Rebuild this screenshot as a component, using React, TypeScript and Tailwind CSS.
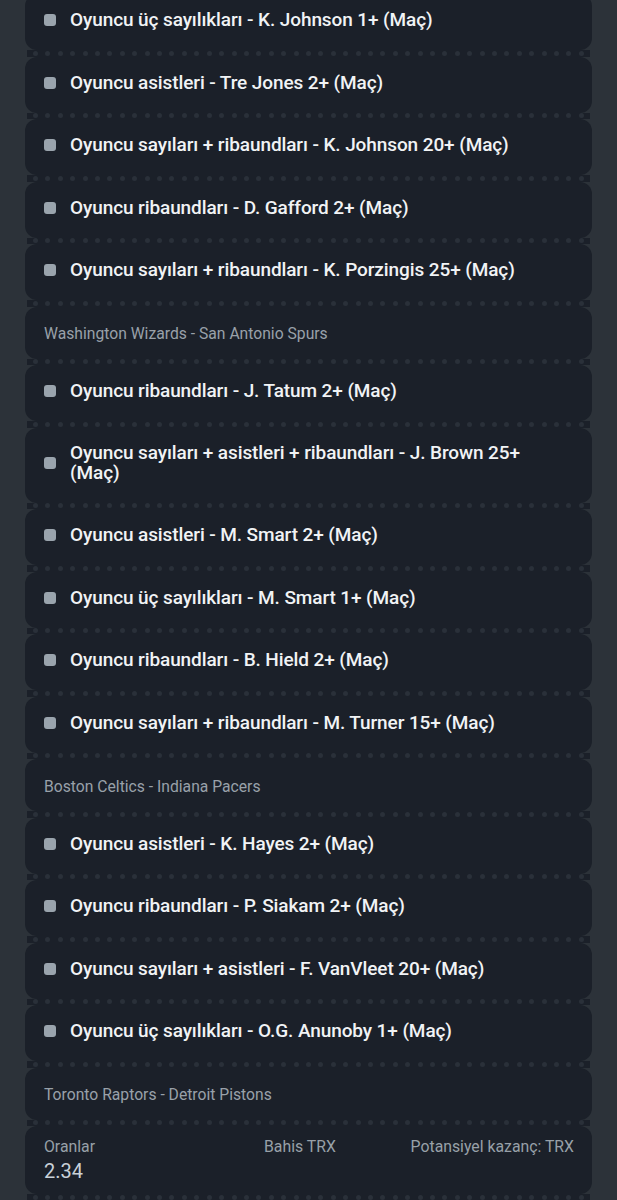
import React from "react";

type Item =
  | { kind: "bet"; text: string; tall?: boolean }
  | { kind: "match"; text: string };

const items: Item[] = [
  { kind: "bet", text: "Oyuncu üç sayılıkları - K. Johnson 1+ (Maç)" },
  { kind: "bet", text: "Oyuncu asistleri - Tre Jones 2+ (Maç)" },
  { kind: "bet", text: "Oyuncu sayıları + ribaundları - K. Johnson 20+ (Maç)" },
  { kind: "bet", text: "Oyuncu ribaundları - D. Gafford 2+ (Maç)" },
  { kind: "bet", text: "Oyuncu sayıları + ribaundları - K. Porzingis 25+ (Maç)" },
  { kind: "match", text: "Washington Wizards - San Antonio Spurs" },
  { kind: "bet", text: "Oyuncu ribaundları - J. Tatum 2+ (Maç)" },
  { kind: "bet", text: "Oyuncu sayıları + asistleri + ribaundları - J. Brown 25+ (Maç)", tall: true },
  { kind: "bet", text: "Oyuncu asistleri - M. Smart 2+ (Maç)" },
  { kind: "bet", text: "Oyuncu üç sayılıkları - M. Smart 1+ (Maç)" },
  { kind: "bet", text: "Oyuncu ribaundları - B. Hield 2+ (Maç)" },
  { kind: "bet", text: "Oyuncu sayıları + ribaundları - M. Turner 15+ (Maç)" },
  { kind: "match", text: "Boston Celtics - Indiana Pacers" },
  { kind: "bet", text: "Oyuncu asistleri - K. Hayes 2+ (Maç)" },
  { kind: "bet", text: "Oyuncu ribaundları - P. Siakam 2+ (Maç)" },
  { kind: "bet", text: "Oyuncu sayıları + asistleri - F. VanVleet 20+ (Maç)" },
  { kind: "bet", text: "Oyuncu üç sayılıkları - O.G. Anunoby 1+ (Maç)" },
  { kind: "match", text: "Toronto Raptors - Detroit Pistons" },
];

function Perforation() {
  return (
    <div className="h-[6.5px] mx-[2px] bg-[#1b2029] flex items-center justify-between px-[6px]">
      {Array.from({ length: 45 }).map((_, i) => (
        <span key={i} className="w-[5px] h-[5px] rounded-full bg-[#2a3039]" />
      ))}
    </div>
  );
}

function BetCard({ text, tall }: { text: string; tall?: boolean }) {
  return (
    <div
      className={`bg-[#1b2029] rounded-[12px] flex items-center pl-[19px] pr-[58px] pb-[4px] ${
        tall ? "h-[75px]" : "h-[56px]"
      }`}
    >
      <span className="w-[12px] h-[12px] rounded-[3px] bg-[#9aa4ad] shrink-0" />
      <p className="ml-[14px] text-[19px] leading-[20px] font-medium text-[#f1f3f5] tracking-[-0.1px]">
        {text}
      </p>
    </div>
  );
}

function MatchCard({ text }: { text: string }) {
  return (
    <div className="bg-[#1b2029] rounded-[12px] h-[52px] flex items-center pl-[19px] pt-[3px]">
      <p className="text-[15.7px] leading-[20px] text-[#99a1a9]">{text}</p>
    </div>
  );
}

export default function App() {
  return (
    <div
      className="w-[617px] h-[1200px] overflow-hidden bg-[#2c3239]"
      style={{ fontFamily: "Roboto, 'Noto Sans', sans-serif" }}
    >
      <div className="mx-[25px] -mt-[6px]">
        {items.map((it, i) => (
          <React.Fragment key={i}>
            {i > 0 && <Perforation />}
            {it.kind === "bet" ? (
              <BetCard text={it.text} tall={it.tall} />
            ) : (
              <MatchCard text={it.text} />
            )}
          </React.Fragment>
        ))}
        <Perforation />
        {/* Summary */}
        <div className="bg-[#1b2029] rounded-[12px] h-[68px] pl-[19px] pr-[18px] pt-[10px]">
          <div className="flex text-[15.8px] leading-[22px] text-[#98a0a8] whitespace-nowrap">
            <span className="w-[220px]">Oranlar</span>
            <span>Bahis TRX</span>
            <span className="ml-auto">Potansiyel kazanç: TRX</span>
          </div>
          <div className="text-[20px] leading-[26px] text-[#c9d1d8]">2.34</div>
        </div>
        <Perforation />
      </div>
    </div>
  );
}
